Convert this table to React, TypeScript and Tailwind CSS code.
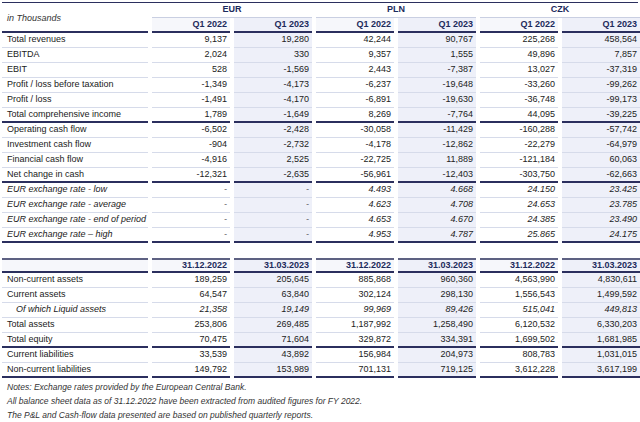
import React from "react";

type R = { label: string; v: string[]; it?: boolean; ind?: boolean; thick?: boolean };

const pl: R[] = [
  { label: "Total revenues", v: ["9,137", "19,280", "42,244", "90,767", "225,268", "458,564"] },
  { label: "EBITDA", v: ["2,024", "330", "9,357", "1,555", "49,896", "7,857"] },
  { label: "EBIT", v: ["528", "-1,569", "2,443", "-7,387", "13,027", "-37,319"] },
  { label: "Profit / loss before taxation", v: ["-1,349", "-4,173", "-6,237", "-19,648", "-33,260", "-99,262"] },
  { label: "Profit / loss", v: ["-1,491", "-4,170", "-6,891", "-19,630", "-36,748", "-99,173"] },
  { label: "Total comprehensive income", v: ["1,789", "-1,649", "8,269", "-7,764", "44,095", "-39,225"], thick: true },
  { label: "Operating cash flow", v: ["-6,502", "-2,428", "-30,058", "-11,429", "-160,288", "-57,742"] },
  { label: "Investment cash flow", v: ["-904", "-2,732", "-4,178", "-12,862", "-22,279", "-64,979"] },
  { label: "Financial cash flow", v: ["-4,916", "2,525", "-22,725", "11,889", "-121,184", "60,063"] },
  { label: "Net change in cash", v: ["-12,321", "-2,635", "-56,961", "-12,403", "-303,750", "-62,663"], thick: true },
  { label: "EUR exchange rate - low", v: ["-", "-", "4.493", "4.668", "24.150", "23.425"], it: true },
  { label: "EUR exchange rate - average", v: ["-", "-", "4.623", "4.708", "24.653", "23.785"], it: true },
  { label: "EUR exchange rate - end of period", v: ["-", "-", "4.653", "4.670", "24.385", "23.490"], it: true },
  { label: "EUR exchange rate – high", v: ["-", "-", "4.953", "4.787", "25.865", "24.175"], it: true, thick: true },
];

const bs: R[] = [
  { label: "Non-current assets", v: ["189,259", "205,645", "885,868", "960,360", "4,563,990", "4,830,611"] },
  { label: "Current assets", v: ["64,547", "63,840", "302,124", "298,130", "1,556,543", "1,499,592"] },
  { label: "Of which Liquid assets", v: ["21,358", "19,149", "99,969", "89,426", "515,041", "449,813"], it: true, ind: true },
  { label: "Total assets", v: ["253,806", "269,485", "1,187,992", "1,258,490", "6,120,532", "6,330,203"] },
  { label: "Total equity", v: ["70,475", "71,604", "329,872", "334,391", "1,699,502", "1,681,985"], thick: true },
  { label: "Current liabilities", v: ["33,539", "43,892", "156,984", "204,973", "808,783", "1,031,015"] },
  { label: "Non-current liabilities", v: ["149,792", "153,989", "701,131", "719,125", "3,612,228", "3,617,199"], thick: true },
];

const grid = "grid grid-cols-[146px_repeat(6,78px)] gap-x-[4px]";

function Rows({ rows }: { rows: R[] }) {
  return (
    <>
      {rows.map((r) => (
        <React.Fragment key={r.label}>
          <div
            className={`h-[15px] flex items-center text-[9px] text-[#1a1a1a] ${r.ind ? "pl-[14px]" : "pl-[5px]"} ${r.it ? "italic" : ""} ${
              r.thick ? "border-b-2 border-[#2b2f5e]" : "border-b border-[#d6dbea]"
            }`}
          >
            {r.label}
          </div>
          {r.v.map((x, i) => (
            <div
              key={i}
              className={`h-[15px] flex items-center justify-end pr-[3px] text-[9px] text-[#222] ${r.it ? "italic" : ""} ${
                i % 2 === 1 ? "bg-[#eef0f9]" : "bg-white"
              } ${r.thick ? "border-b-2 border-[#2b2f5e]" : "border-b border-[#d6dbea]"}`}
            >
              {x}
            </div>
          ))}
        </React.Fragment>
      ))}
    </>
  );
}

function HeadCells({ labels }: { labels: string[] }) {
  return (
    <>
      {labels.map((l, i) => (
        <div
          key={i}
          className={`h-[15px] flex items-center justify-end pr-[3px] text-[9px] font-bold text-[#1d2b5c] border-b-2 border-[#2b2f5e] ${
            i % 2 === 1 ? "bg-[#eef0f9]" : "bg-[#f6f7fb]"
          }`}
        >
          {l}
        </div>
      ))}
    </>
  );
}

export default function App() {
  const q = ["Q1 2022", "Q1 2023", "Q1 2022", "Q1 2023", "Q1 2022", "Q1 2023"];
  const d = ["31.12.2022", "31.03.2023", "31.12.2022", "31.03.2023", "31.12.2022", "31.03.2023"];
  return (
    <div className="w-[640px] h-[422px] bg-white pt-[2px] pl-[2px] overflow-hidden font-['Liberation_Sans',Arial,sans-serif]">
      <div className="border-t-[1.5px] border-[#2b2f5e] w-[636px]" />
      <div className={grid}>
        <div className="row-span-2 h-[30px] flex items-start pt-[9px] pl-[5px] text-[9px] italic text-[#333] border-b-2 border-[#2b2f5e]">
          in Thousands
        </div>
        {["EUR", "PLN", "CZK"].map((c) => (
          <div
            key={c}
            className="col-span-2 h-[15px] flex items-center justify-center text-[9px] font-bold text-[#1d2b5c] border-b border-[#c9cfe2]"
          >
            {c}
          </div>
        ))}
        <HeadCells labels={q} />
        <Rows rows={pl} />
      </div>
      <div className="h-[15px]" />
      <div className={grid}>
        <div className="h-[15px] border-t-2 border-b-2 border-t-[#5d6182] border-b-[#2b2f5e] bg-[#f6f7fb]" />
        {d.map((l, i) => (
          <div
            key={i}
            className={`h-[15px] flex items-center justify-end pr-[3px] text-[9px] font-bold text-[#1d2b5c] border-t-2 border-b-2 border-t-[#5d6182] border-b-[#2b2f5e] ${
              i % 2 === 1 ? "bg-[#eef0f9]" : "bg-[#f6f7fb]"
            }`}
          >
            {l}
          </div>
        ))}
        <Rows rows={bs} />
      </div>
      <div className="pl-[5px] pt-[2px] text-[8.5px] italic text-[#333] leading-[14px]">
        <div>Notes: Exchange rates provided by the European Central Bank.</div>
        <div>All balance sheet data as of 31.12.2022 have been extracted from audited figures for FY 2022.</div>
        <div>The P&amp;L and Cash-flow data presented are based on published quarterly reports.</div>
      </div>
    </div>
  );
}
